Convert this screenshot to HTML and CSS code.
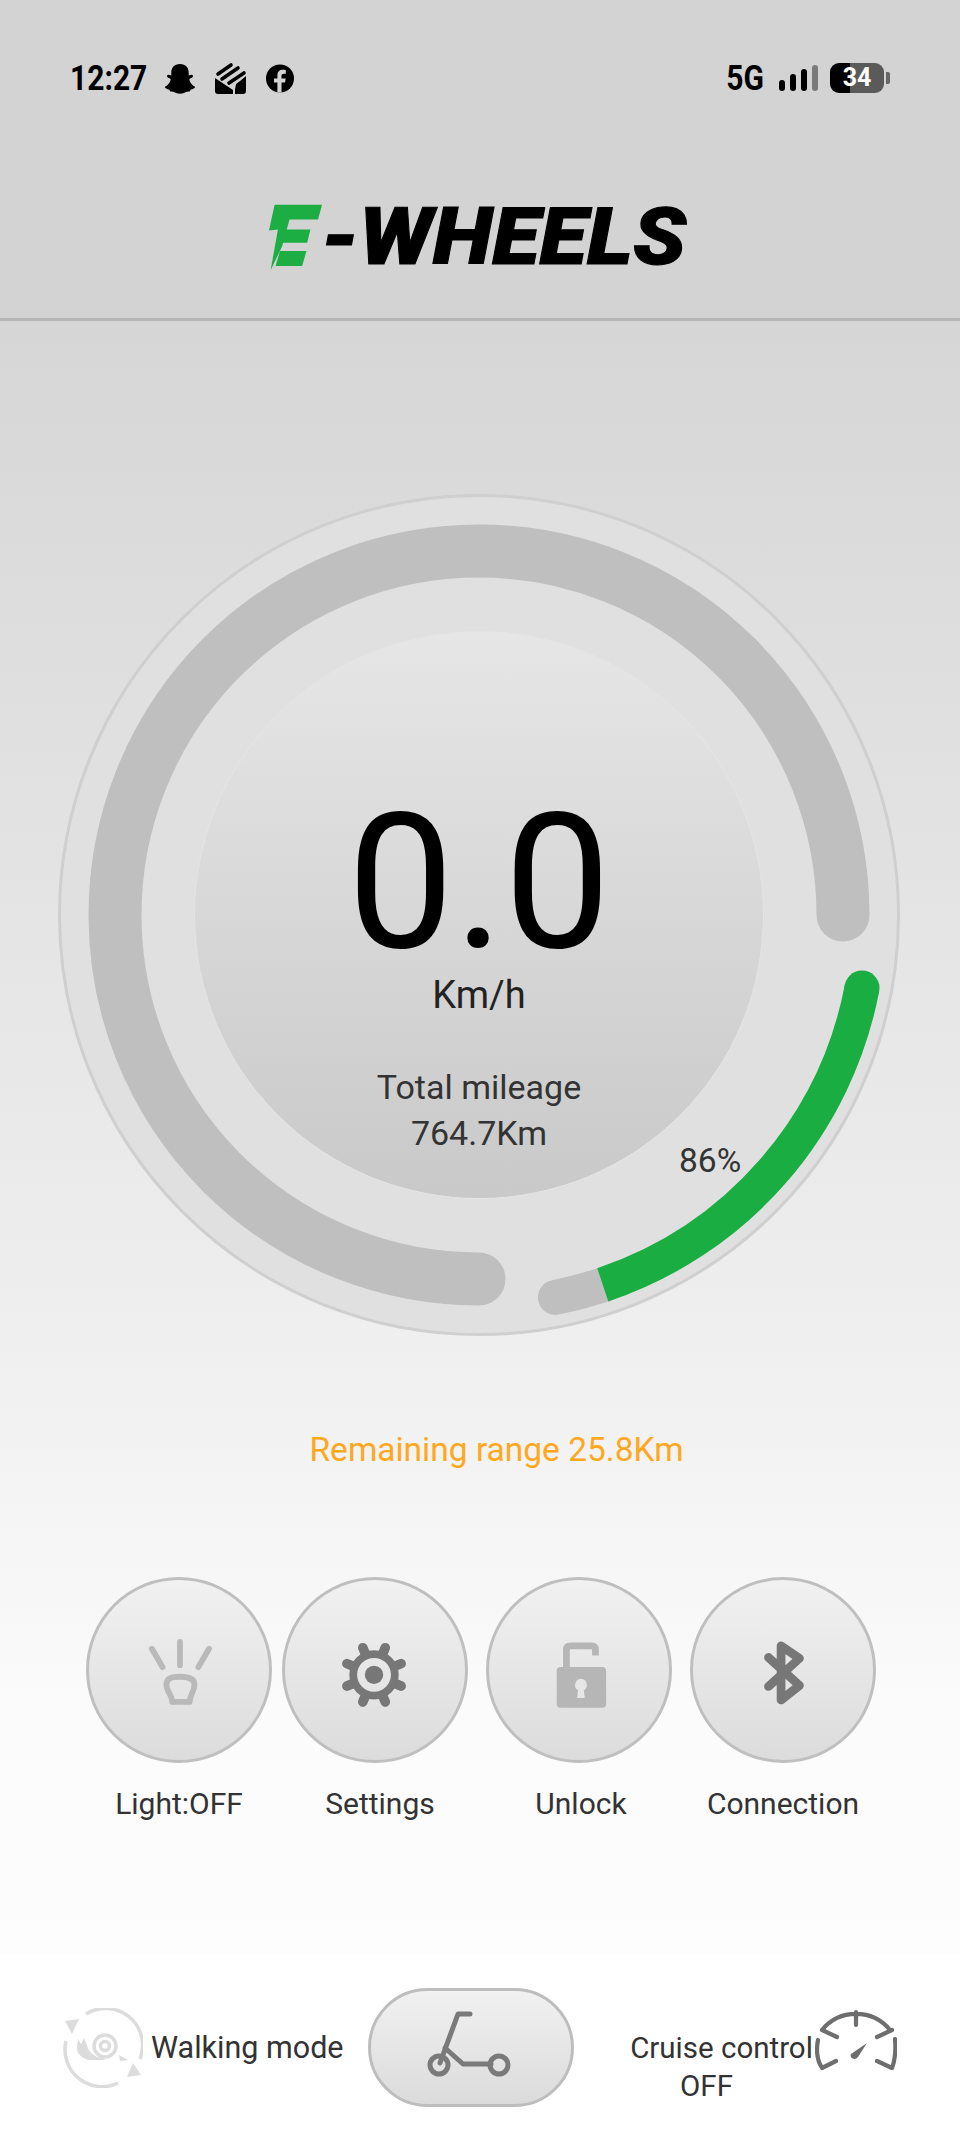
FILE: index.html
```html
<!DOCTYPE html>
<html lang="en">
<head>
  <meta charset="UTF-8">
  <meta name="viewport" content="width=device-width, initial-scale=1.0">
  <title>E-Wheels</title>
  <link rel="stylesheet" href="styles.css">
</head>
<body>
  <header class="top">
    <div class="status">
      <span class="time">12:27</span>
      <svg class="ico-snap" viewBox="0 0 32 32"><path d="M16 1C22 1 25 5 25 10L25 13L28 12C29.5 12 30 14 28.5 15L25.5 16.5C26 20 28.5 23 31.5 24.5C32 26 28.5 27 27 27.5L26 29.5C24 29 22 29.5 20 31C18 32 14 32 12 31C10 29.5 8 29 6 29.5L5 27.5C3.5 27 0 26 .5 24.5C3.5 23 6 20 6.5 16.5L3.5 15C2 14 2.5 12 4 12L7 13L7 10C7 5 10 1 16 1Z"/></svg>
      <svg class="ico-fold" viewBox="0 0 33 32"><path d="M1 16L19 28V32H4Q1 32 1 29ZM21 27.500V32H29Q32 32 32 29V14L26 19L22 22Z"/><path class="stripes" d="M4 12L17 3M8 17L24 6M15 21L30 11"/></svg>
      <svg class="ico-fb" viewBox="0 0 28 28"><circle cx="14" cy="14" r="14"/><path class="cut" d="M15.500 28V18H19L19.700 14H15.500V11.500C15.500 10 16.200 9.200 17.800 9.200H19.800V5.600C18.500 5.400 17.500 5.300 16.500 5.300C13.300 5.300 11.400 7.200 11.400 10.800V14H8V18H11.400V28Z"/></svg>
      <span class="net">5G</span>
      <div class="signal">
        <i class="b1"></i><i class="b2"></i><i class="b3"></i><i class="b4"></i>
      </div>
      <div class="battery"><span>34</span></div>
      <div class="battery-cap"></div>
    </div>
    <div class="logo">
      <svg class="logo-e" viewBox="0 0 170 205">
        <path d="M22 5H165L153 50H67L45 130L10 203L32 80L5 83Z"/>
        <path d="M50 80H130L120 120H41Z"/>
        <path d="M38 145H118L105 190H25Z"/>
      </svg>
      <span class="logo-text">-WHEELS</span>
    </div>
  </header>

  <main class="content">
    <section class="gauge">
      <svg class="arcs" viewBox="0 0 842 842">
        <path class="track" d="M421 785A364 364 0 1 1 785 421"/>
        <path class="batt-rest" d="M497.400 803.400A390 390 0 0 0 544.800 790.800"/>
        <path class="batt-level" d="M544.800 790.800A390 390 0 0 0 804 494"/>
        <circle class="batt-end" cx="804" cy="494" r="17.500"/>
      </svg>
      <div class="dial">
        <div class="speed">0.0</div>
        <div class="unit">Km/h</div>
        <div class="mileage">Total mileage</div>
        <div class="mileage">764.7Km</div>
      </div>
      <span class="percent">86%</span>
    </section>

    <p class="range">Remaining range 25.8Km</p>

    <section class="controls">
      <div class="ctl">
        <div class="round">
          <svg viewBox="0 0 186 186" class="light">
            <path d="M94 64V88M65 71L76 90M124 71L113 90"/>
            <path d="M80 108C80 101 86 100 94 100C102 100 109 101 109 108C109 116 104 118 104 126H86C86 118 80 116 80 108Z"/>
          </svg>
        </div>
        <span class="ctl-label">Light:OFF</span>
      </div>
      <div class="ctl ctl-settings">
        <div class="round">
          <svg viewBox="0 0 186 186" class="gear">
            <g transform="translate(92 98)">
              <path class="teeth" d="M23 9.500L28 11.600M9.500 23L11.600 28M-9.500 23L-11.600 28M-23 9.500L-28 11.600M-23 -9.500L-28 -11.600M-9.500 -23L-11.600 -28M9.500 -23L11.600 -28M23 -9.500L28 -11.600"/>
              <circle class="ring" r="21.500"/>
              <circle r="9.500"/>
            </g>
          </svg>
        </div>
        <span class="ctl-label">Settings</span>
      </div>
      <div class="ctl ctl-unlock">
        <div class="round">
          <svg viewBox="0 0 186 186" class="lock">
            <path class="shackle" d="M80 92V72Q80 68 84 68H106Q110 68 110 72V78"/>
            <rect x="70" y="90" width="51" height="42" rx="4"/>
            <path class="keyhole" d="M95 102A6.500 6.500 0 0 1 98 114L99 122H91L92 114A6.500 6.500 0 0 1 95 102Z"/>
          </svg>
        </div>
        <span class="ctl-label">Unlock</span>
      </div>
      <div class="ctl ctl-conn">
        <div class="round">
          <svg viewBox="0 0 186 186" class="bt">
            <path d="M78 80L110 109L91 124V68L110 81L78 110"/>
          </svg>
        </div>
        <span class="ctl-label">Connection</span>
      </div>
    </section>
  </main>

  <footer class="bottom">
    <div class="walk">
      <svg class="walk-ico" viewBox="0 0 80 80">
        <path class="loop" d="M23 6A37 37 0 0 1 77 51M55 75A37 37 0 0 1 3 33"/>
        <path class="solid" d="M2 13L16 11L9 26ZM64 69L78 67L70 55Z"/>
        <circle class="shell" cx="42" cy="38" r="11"/>
        <circle class="shell" cx="42" cy="38" r="4.500"/>
        <path class="solid" d="M15 31L18 36L21 30L24 37C25 42 28 46 34 49L40 50L42 52H26C20 51 14 46 14 40C14 37 15 34 15 31ZM56 47L65 52L57 53Z"/>
      </svg>
      <span class="mode-text">Walking mode</span>
    </div>
    <div class="pill">
      <svg viewBox="0 0 200 113" class="scooter">
        <path d="M99 23H87L69 72"/>
        <path d="M74 57L92 73H120"/>
        <circle class="wheel" cx="68" cy="74" r="9"/>
        <circle class="wheel" cx="128" cy="74" r="9"/>
      </svg>
    </div>
    <div class="cruise">
      <div class="cruise-text">
        <span class="mode-text">Cruise control</span>
        <span class="mode-text off">OFF</span>
      </div>
      <svg class="cruise-ico" viewBox="0 0 82 64">
        <path d="M7 22A44 44 0 0 1 75 22M41 4V17M7 22L22 29M77 22L62 29M80 31C81 42 80 52 77 60L62 53M3 32C1 42 2 52 7 60L21 53"/>
        <path class="needle" d="M52 35L43 49C40 53 34 50 36 46Z"/>
      </svg>
    </div>
  </footer>
</body>
</html>
```

FILE: styles.css
```css
* {
  box-sizing: border-box;
}

body {
  margin: 0;
  width: 960px;
  height: 2142px;
  overflow: hidden;
  font-family: Roboto, "Liberation Sans", sans-serif;
  color: #333333;
  background-color: #ffffff;
}

/* header */
.top {
  display: flex;
  flex-direction: column;
  height: 321px;
  padding-top: 62px;
  background-color: #d3d3d3;
  border-bottom: 3px solid #b6b6b6;
}

.status {
  display: flex;
  align-items: center;
  height: 32px;
  padding-left: 70px;
  color: #000000;
  fill: #000000;
}

.time,
.net {
  font-weight: 700;
  font-size: 30px;
  transform: scaleY(1.14);
}

.ico-snap {
  width: 32px;
  height: 31px;
  margin-left: 17px;
}

.ico-fold {
  width: 33px;
  height: 32px;
  margin-left: 18px;
}

.stripes {
  fill: none;
  stroke: #000000;
  stroke-width: 3.6;
  stroke-linecap: round;
}

.ico-fb {
  width: 28px;
  height: 29px;
  margin-left: 19px;
}

.cut {
  fill: #d3d3d3;
}

.net {
  margin-left: 432px;
}

.signal {
  display: flex;
  align-items: flex-end;
  gap: 5px;
  height: 26px;
  margin-left: 15px;
}

.signal i {
  display: block;
  width: 6px;
  border-radius: 3px;
  background-color: #000000;
}

.signal .b1 {
  height: 11px;
}

.signal .b2 {
  height: 17px;
}

.signal .b3 {
  height: 22px;
}

.signal .b4 {
  height: 26px;
  background-color: #7a7a7a;
}

.battery {
  width: 54px;
  height: 30px;
  margin-left: 12px;
  border-radius: 9px;
  text-align: center;
  color: #ffffff;
  font-weight: 700;
  font-size: 25px;
  line-height: 30px;
  background: linear-gradient(90deg, #000000 37%, #5a5a5a 37%);
}

.battery-cap {
  width: 4px;
  height: 12px;
  margin-left: 2px;
  border-radius: 0 2px 2px 0;
  background-color: #666666;
}

.logo {
  display: flex;
  align-items: center;
  height: 68px;
  margin-top: 109px;
  padding-left: 267px;
}

.logo-e {
  width: 57px;
  height: 68px;
  fill: #1cad43;
}

.logo-text {
  margin-left: -3px;
  color: #000000;
  font-weight: 900;
  font-style: italic;
  font-size: 79px;
  line-height: 68px;
  -webkit-text-stroke: 1px #000000;
  transform: scaleX(1.105);
  transform-origin: left center;
}

/* gauge */
.content {
  height: 1634px;
  padding-top: 173px;
  background: linear-gradient(180deg, #d6d6d6 0%, #eeeeee 60%, #fbfbfb 85%, #fdfdfd 100%);
}

.gauge {
  display: flex;
  align-items: center;
  justify-content: center;
  position: relative;
  width: 842px;
  height: 842px;
  margin-left: 58px;
  border: 3px solid #cfcfcf;
  border-radius: 50%;
  background-color: #e0e0e0;
}

.arcs {
  position: absolute;
  top: -3px;
  left: -3px;
  width: 842px;
  height: 842px;
  fill: none;
}

.track {
  stroke: #bfbfbf;
  stroke-width: 53;
  stroke-linecap: round;
}

.batt-rest {
  stroke: #bfbfbf;
  stroke-width: 35;
  stroke-linecap: round;
}

.batt-level {
  stroke: #19ad42;
  stroke-width: 35;
}

.batt-end {
  fill: #19ad42;
}

.dial {
  display: flex;
  flex-direction: column;
  align-items: center;
  position: relative;
  width: 570px;
  height: 568px;
  padding-top: 170px;
  border: 1px solid #e4e4e4;
  border-radius: 50%;
  background: linear-gradient(180deg, #e6e6e6 0%, #c9c9c9 100%);
}

.speed {
  color: #000000;
  font-size: 190px;
  line-height: 160px;
}

.unit {
  margin-top: 10px;
  color: #222222;
  font-size: 38px;
  line-height: 46px;
}

.mileage {
  font-size: 34px;
  line-height: 46px;
}

.unit + .mileage {
  margin-top: 46px;
}

.percent {
  position: absolute;
  left: 618px;
  top: 646px;
  font-size: 33.500px;
  line-height: 36px;
}

.range {
  margin: 94px 0 0 0;
  padding-left: 33px;
  text-align: center;
  color: #ffa81f;
  font-size: 33.500px;
  line-height: 40px;
}

/* round buttons */
.controls {
  display: flex;
  margin-top: 107px;
  padding-left: 86px;
}

.ctl {
  display: flex;
  flex-direction: column;
  align-items: center;
  width: 186px;
}

.ctl-settings {
  margin-left: 10px;
}

.ctl-unlock {
  margin-left: 18px;
}

.ctl-conn {
  margin-left: 18px;
}

.round {
  width: 186px;
  height: 186px;
  border: 3px solid #bfbfbf;
  border-radius: 50%;
  background: linear-gradient(180deg, #f1f1f1 0%, #dcdcdc 100%);
}

.round svg {
  display: block;
  width: 180px;
  height: 180px;
}

.ctl-label {
  margin-top: 23px;
  font-size: 30px;
  line-height: 36px;
}

.ctl-settings .ctl-label {
  padding-left: 10px;
}

.ctl-unlock .ctl-label {
  padding-left: 4px;
}

.light path {
  fill: none;
  stroke: #b9b9b9;
  stroke-width: 6;
  stroke-linecap: round;
  stroke-linejoin: round;
}

.gear {
  fill: #777777;
}

.teeth {
  fill: none;
  stroke: #777777;
  stroke-width: 10;
  stroke-linecap: round;
}

.ring {
  fill: none;
  stroke: #777777;
  stroke-width: 8;
}

.lock rect {
  fill: #b6b6b6;
}

.shackle {
  fill: none;
  stroke: #b6b6b6;
  stroke-width: 7;
}

.keyhole {
  fill: #e6e6e6;
}

.bt path {
  fill: none;
  stroke: #777777;
  stroke-width: 9;
  stroke-linecap: round;
  stroke-linejoin: round;
}

/* bottom bar */
.bottom {
  display: flex;
  height: 187px;
  padding-top: 33px;
  background-color: #ffffff;
}

.walk {
  display: flex;
  align-items: center;
  align-self: flex-start;
  width: 368px;
  height: 80px;
  margin-top: 20px;
  padding-left: 63px;
}

.walk-ico {
  width: 80px;
  height: 80px;
  fill: none;
}

.loop,
.shell {
  fill: none;
  stroke: #dcdcdc;
  stroke-width: 3.500;
}

.solid {
  fill: #dcdcdc;
}

.mode-text {
  display: block;
  font-size: 30px;
  line-height: 38px;
}

.walk .mode-text {
  margin-left: 8px;
  font-size: 30.500px;
}

.pill {
  width: 206px;
  height: 119px;
  border: 3px solid #bdbdbd;
  border-radius: 60px;
  background: linear-gradient(180deg, #f1f1f1 0%, #dbdbdb 100%);
}

.scooter {
  display: block;
  width: 200px;
  height: 113px;
}

.scooter path {
  fill: none;
  stroke: #7a7a7a;
  stroke-width: 5;
  stroke-linecap: round;
  stroke-linejoin: round;
}

.wheel {
  fill: none;
  stroke: #7a7a7a;
  stroke-width: 5;
}

.cruise {
  display: flex;
  align-items: flex-start;
  margin-left: 54px;
  margin-top: 20px;
}

.cruise-text {
  width: 187px;
  text-align: center;
  margin-top: 21px;
  font-size: 29.500px;
}

.cruise-text .mode-text {
  font-size: 29.500px;
}

.off {
  padding-right: 30px;
}

.cruise-ico {
  width: 82px;
  height: 64px;
  fill: none;
  stroke: #6e6e6e;
  stroke-width: 4.200;
  stroke-linecap: round;
  stroke-linejoin: round;
}

.needle {
  fill: #6e6e6e;
  stroke: none;
}
```
